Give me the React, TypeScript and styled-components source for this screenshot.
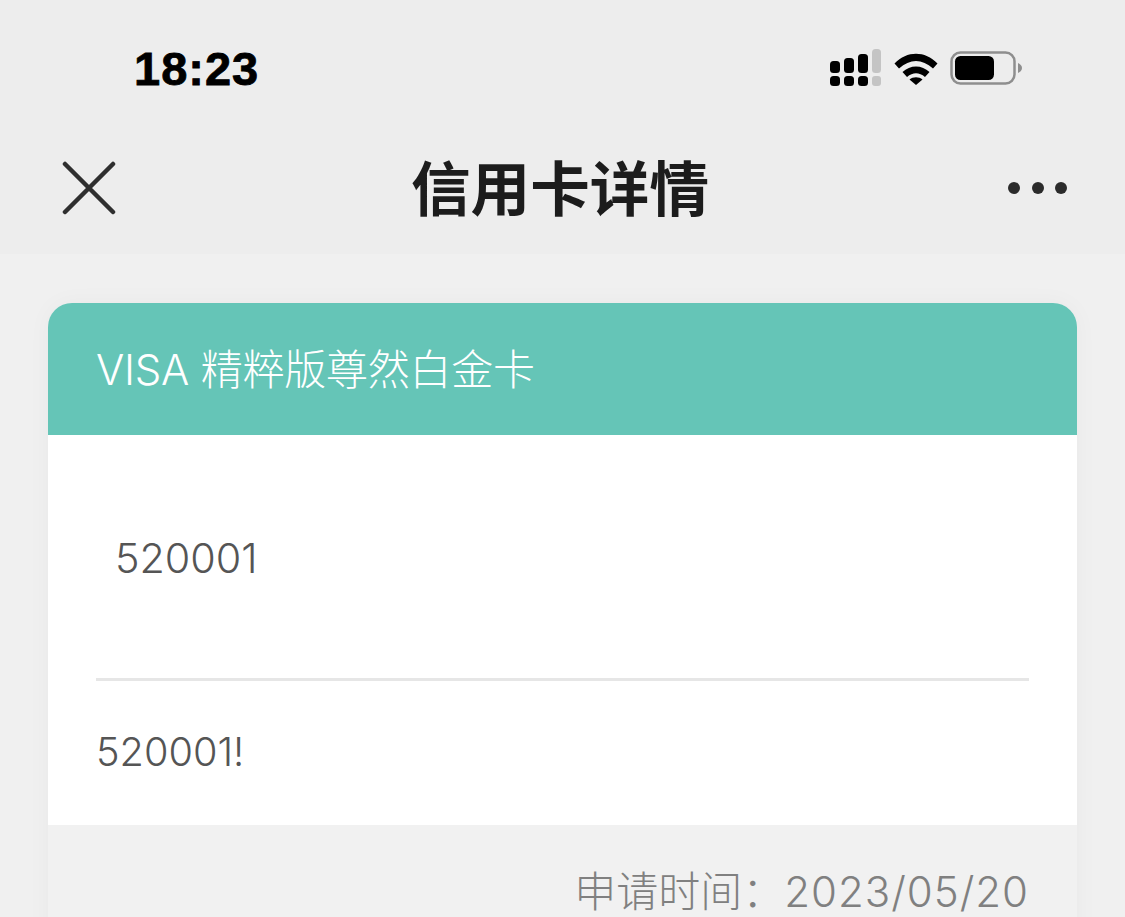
import styled, { createGlobalStyle } from 'styled-components'

const GlobalStyle = createGlobalStyle`
  html, body {
    margin: 0;
    padding: 0;
    height: 917px;
    overflow: hidden;
    background: #f0f0f0;
    font-family: Inter, "Noto Sans CJK SC", sans-serif;
  }
`

const CellularIcon = () => (
  <svg width="52" height="38" viewBox="0 0 52 38">
    <g fill="#000">
      <rect x="0" y="12" width="10" height="12" rx="3.5" />
      <rect x="14" y="9" width="10" height="15" rx="3.5" />
      <rect x="28" y="5" width="10" height="19" rx="3.5" />
      <rect x="0" y="27" width="10" height="10" rx="3.5" />
      <rect x="14" y="27" width="10" height="10" rx="3.5" />
      <rect x="28" y="27" width="10" height="10" rx="3.5" />
    </g>
    <g fill="#c4c4c4">
      <rect x="42" y="0" width="9" height="24" rx="3.5" />
      <rect x="42" y="27" width="9" height="10" rx="3" />
    </g>
  </svg>
)

const WifiIcon = () => (
  <svg width="44" height="33" viewBox="0 0 44 33">
    <path d="M0.5 11.5 C13 -1.5 31 -1.5 43.5 11.5 L39 16.5 C28 6.5 16 6.5 5 16.5 Z" fill="#000" />
    <path d="M8.5 20 C16 12.5 28 12.5 35.5 20 L31 25 C25 20 19 20 13 25 Z" fill="#000" />
    <path d="M15.5 27.5 C19 24.5 25 24.5 28.5 27.5 L22 33 Z" fill="#000" />
  </svg>
)

const BatteryIcon = () => (
  <svg width="72" height="34" viewBox="0 0 72 34">
    <rect x="1.5" y="1.5" width="63" height="31" rx="9" fill="none" stroke="#8e8e8e" stroke-width="2.5" />
    <rect x="5" y="5" width="39" height="24" rx="5.5" fill="#000" />
    <path d="M68 12 C70.5 13 72 15 72 17 C72 19 70.5 21 68 22 Z" fill="#8e8e8e" />
  </svg>
)

const CloseIcon = () => (
  <svg width="54" height="54" viewBox="0 0 54 54">
    <path d="M3 3 L51 51 M51 3 L3 51" stroke="#2f2f2f" stroke-width="4.5" stroke-linecap="round" />
  </svg>
)

const App = () => (
  <>
    <GlobalStyle />
    <Page>
      <StatusBar>
        <Time>18:23</Time>
        <StatusIcons>
          <CellularIcon />
          <WifiIcon />
          <BatteryIcon />
        </StatusIcons>
      </StatusBar>

      <NavBar>
        <CloseIcon />
        <NavTitle>信用卡详情</NavTitle>
        <MoreDots>
          <span />
          <span />
          <span />
        </MoreDots>
      </NavBar>

      <Content>
        <Card>
          <CardHeader>VISA 精粹版尊然白金卡</CardHeader>
          <CardBody>
            <Code>520001</Code>
            <Divider />
            <Message>520001!</Message>
          </CardBody>
          <CardFooter>
            申请时间：<DateText>2023/05/20</DateText>
          </CardFooter>
        </Card>
      </Content>
    </Page>
  </>
)

export default App

const Page = styled.div`
  width: 1125px;
  height: 917px;
  overflow: hidden;
  display: flex;
  flex-direction: column;
  background: #f0f0f0;
`

const StatusBar = styled.div`
  flex: none;
  height: 130px;
  box-sizing: border-box;
  padding: 6px 103px 0 134px;
  display: flex;
  align-items: center;
  justify-content: space-between;
  background: #ededed;
`

const Time = styled.div`
  font-family: "Liberation Sans", sans-serif;
  font-size: 47px;
  font-weight: 700;
  letter-spacing: 1px;
  color: #000;
  -webkit-text-stroke: 0.8px #000;
`

const StatusIcons = styled.div`
  display: flex;
  align-items: center;
  gap: 12px;
`

const NavBar = styled.div`
  flex: none;
  height: 124px;
  box-sizing: border-box;
  padding: 0 58px 8px 62px;
  display: flex;
  align-items: center;
  justify-content: space-between;
  background: #ededed;
`

const NavTitle = styled.div`
  margin: 0 4px 4px 0;
  font-family: "Noto Sans CJK SC", sans-serif;
  font-size: 59.6px;
  font-weight: 600;
  color: #1c1c1c;
  line-height: 1;
`

const MoreDots = styled.div`
  display: flex;
  gap: 11.5px;
  span {
    width: 12px;
    height: 12px;
    border-radius: 50%;
    background: #2b2b2b;
  }
`

const Content = styled.div`
  flex: none;
  padding: 49px 48px 0;
`

const Card = styled.div`
  border-radius: 24px 24px 0 0;
  overflow: hidden;
  box-shadow: 0 0 24px rgba(0, 0, 0, 0.035);
`

const CardHeader = styled.div`
  height: 132px;
  box-sizing: border-box;
  padding: 0 48px 6px;
  display: flex;
  align-items: center;
  background: #65c5b7;
  color: #fff;
  font-size: 42px;
  font-weight: 300;
  letter-spacing: -0.25px;
`

const CardBody = styled.div`
  height: 390px;
  box-sizing: border-box;
  padding: 0 48px;
  background: #fff;
`

const Code = styled.div`
  height: 243px;
  box-sizing: border-box;
  padding: 93px 0 0 19px;
  font-size: 41.3px;
  font-weight: 300;
  line-height: 60px;
  color: #555;
`

const Divider = styled.div`
  height: 3px;
  background: #e6e6e6;
`

const Message = styled.div`
  padding-top: 41px;
  font-size: 39.7px;
  font-weight: 300;
  line-height: 60px;
  color: #555;
`

const CardFooter = styled.div`
  height: 132px;
  box-sizing: border-box;
  padding: 37px 48px 0;
  text-align: right;
  background: #f1f1f1;
  color: #808080;
  font-size: 42px;
  font-weight: 300;
  line-height: 60px;
`

const DateText = styled.span`
  letter-spacing: 1px;
`
